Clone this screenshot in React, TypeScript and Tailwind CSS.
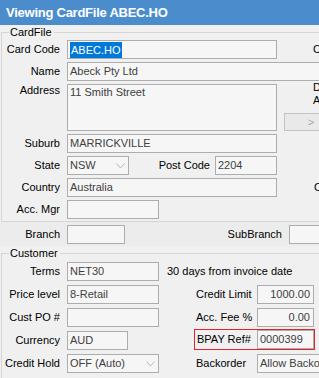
import React from "react";

const inputBase =
  "h-[19px] shrink-0 border border-[#adadad] bg-[#f6f6f6] flex items-center px-[2px] text-[#404040] whitespace-nowrap overflow-hidden";

function Chevron() {
  return (
    <svg width="9" height="6" viewBox="0 0 9 6" className="shrink-0">
      <path d="M0.5 0.5 L4.5 5 L8.5 0.5" fill="none" stroke="#b8b8b8" strokeWidth="1" />
    </svg>
  );
}

function Label({ children }: { children: React.ReactNode }) {
  return <div className="w-[58px] shrink-0 text-right whitespace-nowrap">{children}</div>;
}

function Legend({ title }: { title: string }) {
  return (
    <div className="flex h-[14px]">
      <div className="mt-[7px] w-[8px] h-[7px] border-t border-l border-[#d5d5d5]" />
      <span className="pl-[1px] pr-[2px] leading-[14px]">{title}</span>
      <div className="flex-1 mt-[7px] border-t border-[#d5d5d5]" />
    </div>
  );
}

export default function App() {
  return (
    <div className="w-[319px] h-[378px] overflow-hidden bg-[#f0f0f0] text-[11px] leading-[13px] text-black font-['Liberation_Sans',Arial,sans-serif]">
      <div className="h-[25px] bg-[#4b8dcc] text-white font-bold text-[13px] tracking-[-0.25px] pl-[6px] flex items-center whitespace-nowrap">
        Viewing CardFile ABEC.HO
      </div>

      {/* CardFile group */}
      <div className="ml-[1px] w-[400px]">
        <Legend title="CardFile" />
        <div className="border-l border-b border-[#d5d5d5] pt-[1px] pb-[2px] flex flex-col gap-[3px]">
          <div className="flex items-center h-[19px]">
            <Label>Card Code</Label>
            <div className={inputBase + " ml-[7px] w-[210px]"}>
              <span className="bg-[#0078d7] text-white leading-[16px] px-[1px]">ABEC.HO</span>
            </div>
            <span className="ml-[36px] whitespace-nowrap">Contact</span>
          </div>

          <div className="flex items-center h-[19px]">
            <Label>Name</Label>
            <div className={inputBase + " ml-[7px] w-[300px]"}>Abeck Pty Ltd</div>
          </div>

          <div className="flex items-start h-[47px]">
            <Label>Address</Label>
            <div className={inputBase + " ml-[7px] w-[210px] h-[47px] items-start pt-[1px]"}>11 Smith Street</div>
            <div className="ml-[7px] w-[60px] h-[47px] flex flex-col">
              <div className="pl-[29px] -mt-[3px] leading-[13px] whitespace-nowrap">
                <div>Delivery</div>
                <div>Address</div>
              </div>
              <div className="mt-auto h-[18px] w-[54px] border border-[#c2c2c2] bg-[#e9e9e9] text-[#a8a8a8] flex items-center justify-center">
                &gt;
              </div>
            </div>
          </div>

          <div className="flex items-center h-[19px]">
            <Label>Suburb</Label>
            <div className={inputBase + " ml-[7px] w-[210px]"}>MARRICKVILLE</div>
          </div>

          <div className="flex items-center h-[19px]">
            <Label>State</Label>
            <div className={inputBase + " ml-[7px] w-[62px] justify-between pr-[3px]"}>
              <span>NSW</span>
              <Chevron />
            </div>
            <div className="w-[81px] shrink-0 text-right whitespace-nowrap">Post Code</div>
            <div className={inputBase + " ml-[5px] w-[62px]"}>2204</div>
          </div>

          <div className="flex items-center h-[19px]">
            <Label>Country</Label>
            <div className={inputBase + " ml-[7px] w-[210px]"}>Australia</div>
            <span className="ml-[37px] whitespace-nowrap">Contact</span>
          </div>

          <div className="flex items-center h-[19px]">
            <Label>Acc. Mgr</Label>
            <div className={inputBase + " ml-[7px] w-[92px]"}></div>
          </div>
        </div>
      </div>

      {/* Branch band */}
      <div className="w-[400px] h-[24px] pt-[3px] bg-[#ececec] flex items-start">
        <div className="w-[60px] shrink-0 text-right h-[19px] flex items-center justify-end">Branch</div>
        <div className={inputBase + " ml-[7px] w-[58px]"}></div>
        <div className="w-[157px] shrink-0 h-[19px] flex items-center justify-end">SubBranch</div>
        <div className={inputBase + " ml-[7px] w-[50px]"}></div>
      </div>

      {/* Customer group */}
      <div className="ml-[1px] w-[400px]">
        <Legend title="Customer" />
        <div className="border-l border-[#d5d5d5] pt-[2px] flex flex-col gap-[4px] pb-[10px]">
          <div className="flex items-center h-[19px]">
            <Label>Terms</Label>
            <div className={inputBase + " ml-[7px] w-[92px]"}>NET30</div>
            <span className="ml-[8px] whitespace-nowrap">30 days from invoice date</span>
          </div>

          <div className="flex items-center h-[19px]">
            <div className="w-[194px] shrink-0 flex items-center">
              <Label>Price level</Label>
              <div className={inputBase + " ml-[7px] w-[92px]"}>8-Retail</div>
            </div>
            <div className="w-[61px] shrink-0 whitespace-nowrap">Credit Limit</div>
            <div className={inputBase + " w-[57px] justify-end pr-[3px]"}>1000.00</div>
          </div>

          <div className="flex items-center h-[19px]">
            <div className="w-[194px] shrink-0 flex items-center">
              <Label>Cust PO #</Label>
              <div className={inputBase + " ml-[7px] w-[92px]"}></div>
            </div>
            <div className="w-[61px] shrink-0 whitespace-nowrap">Acc. Fee %</div>
            <div className={inputBase + " w-[57px] justify-end pr-[3px]"}>0.00</div>
          </div>

          <div className="flex items-start h-[19px]">
            <div className="w-[192px] shrink-0 flex items-center h-[19px]">
              <Label>Currency</Label>
              <div className={inputBase + " ml-[7px] w-[61px]"}>AUD</div>
            </div>
            <div className="-mt-[2px] w-[121px] h-[21px] shrink-0 border border-[#e0242a] flex items-center pl-[2px]">
              <span className="whitespace-nowrap">BPAY Ref#</span>
              <div className={inputBase + " ml-auto w-[57px] h-[17px]"}>0000399</div>
            </div>
          </div>

          <div className="flex items-center h-[19px]">
            <div className="w-[194px] shrink-0 flex items-center">
              <Label>Credit Hold</Label>
              <div className={inputBase + " ml-[7px] w-[92px] justify-between pr-[3px]"}>
                <span>OFF (Auto)</span>
                <Chevron />
              </div>
            </div>
            <div className="w-[61px] shrink-0 whitespace-nowrap">Backorder</div>
            <div className={inputBase + " w-[90px] justify-between pr-[3px]"}>
              <span>Allow Backorder</span>
              <Chevron />
            </div>
          </div>
        </div>
      </div>
    </div>
  );
}
